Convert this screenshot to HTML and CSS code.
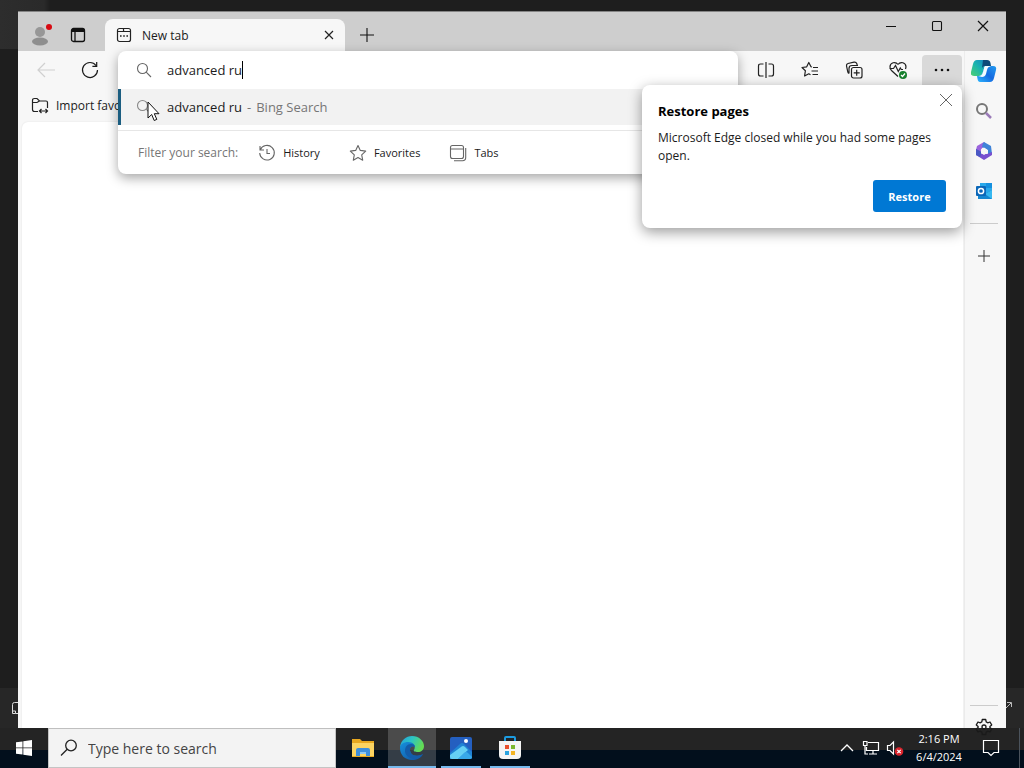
FILE: index.html
```html
<!DOCTYPE html>
<html lang="en">
<head>
    <meta charset="UTF-8">
    <meta name="viewport" content="width=device-width, initial-scale=1.0">
    <title>New tab</title>
    <link rel="stylesheet" href="styles.css">
</head>
<body>
<div class="desktop">

    <!-- app behind the browser -->
    <div class="back-app">
        <div class="back-top"></div>
        <div class="back-status">
            <svg width="18" height="16" viewBox="0 0 18 16" fill="none" stroke="#ddd"><path d="M18 2.500h-3.500q-2 0-2 2v6.500h3v2.500H18M12.500 11v2.500h3"/></svg>
            <svg width="18" height="16" viewBox="0 0 18 16" fill="none" stroke="#bbb"><path d="M0 8l5-5M1 2.500h4.500V7"/></svg>
        </div>
    </div>

    <div class="window">
        <div class="titlebar">
            <button class="avatar" aria-label="Profile">
                <svg width="24" height="24" viewBox="0 0 24 24"><circle cx="12" cy="9" r="5" fill="#979797"/><ellipse cx="12" cy="18.500" rx="8" ry="4" fill="#8e8e8e"/><circle cx="21" cy="4" r="3" fill="#d80a12"/></svg>
            </button>
            <button class="tab-actions" aria-label="Tab actions">
                <svg width="16" height="16" viewBox="0 0 16 16" fill="none" stroke="#111" stroke-width="1.300"><rect x="1.500" y="1.500" width="13" height="13" rx="2"/><path d="M2 3.500h12" stroke-width="3"/><path d="M5 4v10"/></svg>
            </button>
            <div class="tab">
                <svg width="16" height="16" viewBox="0 0 16 16" fill="none" stroke="#222" stroke-width="1.200"><rect x="1.500" y="1.500" width="13" height="13" rx="2"/><path d="M2 4.500h5.500M7.500 2v1.500q0 1 1 1h6"/><path d="M4 9h1.600M7.200 9h1.600M10.400 9h1.600" stroke-width="1.600"/></svg>
                <span class="tab-title">New tab</span>
                <button class="tab-close" aria-label="Close tab">
                    <svg width="10" height="10" viewBox="0 0 10 10" stroke="#222" stroke-width="1.200"><path d="M1 1l8 8M9 1L1 9"/></svg>
                </button>
            </div>
            <button class="new-tab" aria-label="New tab">
                <svg width="16" height="16" viewBox="0 0 16 16" stroke="#111" stroke-width="1.100"><path d="M8 1v14M1 8h14"/></svg>
            </button>
            <div class="window-controls">
                <button aria-label="Minimize"><svg width="12" height="12" viewBox="0 0 12 12" stroke="#111"><path d="M1 6.500h10"/></svg></button>
                <button aria-label="Maximize"><svg width="12" height="12" viewBox="0 0 12 12" fill="none" stroke="#111" stroke-width="1.100"><rect x="1.500" y="1.500" width="9" height="9" rx="1"/></svg></button>
                <button aria-label="Close"><svg width="12" height="12" viewBox="0 0 12 12" stroke="#111" stroke-width="1.200"><path d="M1 1l10 10M11 1L1 11"/></svg></button>
            </div>
        </div>

        <div class="window-body">
            <div class="main">
                <div class="toolbar">
                    <button class="tool" aria-label="Back" disabled>
                        <svg width="20" height="16" viewBox="0 0 20 16" fill="none" stroke="#d0d0d0" stroke-width="1.200"><path d="M19 8H2M9 1L2 8l7 7"/></svg>
                    </button>
                    <button class="tool" aria-label="Refresh">
                        <svg width="18" height="18" viewBox="0 0 18 18" fill="none" stroke="#1a1a1a" stroke-width="1.200"><path d="M16.500 9A7.500 7.500 0 1 1 15 4.500M15.700 1v4.300h-4.300"/></svg>
                    </button>

                    <div class="omnibox-slot">
                        <div class="omnibox">
                            <div class="omnibox-row">
                                <svg width="16" height="16" viewBox="0 0 16 16" fill="none" stroke="#666" stroke-width="1.100"><circle cx="6.500" cy="6.500" r="5"/><path d="M10.200 10.200L15 15"/></svg>
                                <input class="omnibox-input" type="text" value="advanced ru" size="9" aria-label="Search or enter web address">
                                <span class="caret"></span>
                            </div>
                            <button class="suggestion">
                                <svg width="16" height="16" viewBox="0 0 16 16" fill="none" stroke="#888" stroke-width="1.100"><circle cx="6.500" cy="6.500" r="5"/><path d="M10.200 10.200L15 15"/></svg>
                                <span class="suggestion-text"><span>advanced ru</span><span class="muted">-</span><span class="muted">Bing Search</span></span>
                            </button>
                            <div class="filters">
                                <span class="muted">Filter your search:</span>
                                <button>
                                    <svg width="18" height="18" viewBox="0 0 18 18" fill="none" stroke="#666" stroke-width="1.100"><path d="M2 2v4h4M2.300 5.800A7.300 7.300 0 1 1 1.700 9M9 5v4.500h3"/></svg>
                                    History
                                </button>
                                <button>
                                    <svg width="18" height="18" viewBox="0 0 18 18" fill="none" stroke="#666" stroke-width="1.100" stroke-linejoin="round"><path d="M9 1.500l2.300 4.900 5.400.7-4 3.700 1 5.400L9 13.600l-4.700 2.600 1-5.400-4-3.700 5.400-.7z"/></svg>
                                    Favorites
                                </button>
                                <button>
                                    <svg width="18" height="18" viewBox="0 0 18 18" fill="none" stroke="#666" stroke-width="1.100"><rect x="1.500" y="1.500" width="13" height="13" rx="2"/><path d="M1.500 5h13M16.700 4v9.500q0 3.200-3.200 3.200H5"/></svg>
                                    Tabs
                                </button>
                            </div>
                        </div>
                    </div>

                    <button class="tool" aria-label="Split screen">
                        <svg width="18" height="18" viewBox="0 0 18 18" fill="none" stroke="#222" stroke-width="1.200"><path d="M9 1v16M6.500 3H3.500q-2 0-2 2v8q0 2 2 2h3M11.500 3h3q2 0 2 2v8q0 2-2 2h-3"/></svg>
                    </button>
                    <button class="tool" aria-label="Favorites">
                        <svg width="18" height="18" viewBox="0 0 18 18" fill="none" stroke="#222" stroke-width="1.200" stroke-linejoin="round"><path d="M11 6l-1-.300L7.800 1.500 5.700 5.800l-4.700.700 3.400 3.200-.800 5.300 4.200-2.200 1.700.900M12 6.500h5M10.500 10h6.500M11.500 13.500h5.500"/></svg>
                    </button>
                    <button class="tool" aria-label="Collections">
                        <svg width="18" height="18" viewBox="0 0 18 18" fill="none" stroke="#222" stroke-width="1.200"><rect x="6.500" y="6.500" width="10.500" height="10.500" rx="2"/><path d="M11.700 8.800v6M8.700 11.800h6M4 12.500Q3 12 2.800 10.800L1.500 5Q1.200 3 3 2.500l6-1.300q2-.400 2.700 1.300l.600 1.500M4 12.500V7.500Q4 4.500 7 4.500h6"/></svg>
                    </button>
                    <button class="tool" aria-label="Browser essentials">
                        <svg width="20" height="20" viewBox="0 0 20 20" fill="none" stroke="#222" stroke-width="1.200"><path d="M10 4.500C7.500 1 2 2.500 2 7q0 2 1.500 3.500l6.500 6M10 4.500C12.500 1 18 2.500 18 7l-.500 2M1.500 8.500h4l2-3 2.800 6 2-3.500 1 1.500H15"/><circle cx="15" cy="15" r="4" fill="#16802d" stroke="none"/><path d="M13 15l1.500 1.500 2.500-3" stroke="#fff"/></svg>
                    </button>
                    <button class="tool more" aria-label="Settings and more">
                        <svg width="16" height="16" viewBox="0 0 16 16" fill="#111"><circle cx="2" cy="8" r="1.300"/><circle cx="8" cy="8" r="1.300"/><circle cx="14" cy="8" r="1.300"/></svg>
                    </button>
                </div>

                <div class="bookmarks">
                    <button>
                        <svg width="18" height="18" viewBox="0 0 18 18" fill="none" stroke="#222" stroke-width="1.200"><path d="M7 14.500H3.500q-2 0-2-2v-9q0-2 2-2H6L8.500 4H15q1.500 0 1.500 1.500V11M1.500 5.500H6L8.500 4M8.500 14h8M10.500 12l-2 2 2 2M14.500 12l2 2-2 2"/></svg>
                        Import favorites
                    </button>
                </div>

                <div class="page"></div>

                <div class="restore" role="dialog" aria-labelledby="restore-title">
                    <button class="restore-close" aria-label="Close">
                        <svg width="12" height="12" viewBox="0 0 12 12" stroke="#666"><path d="M0 0l12 12M12 0L0 12"/></svg>
                    </button>
                    <h2 id="restore-title">Restore pages</h2>
                    <p>Microsoft Edge closed while you had some pages open.</p>
                    <button class="restore-btn">Restore</button>
                </div>
            </div>

            <div class="sidebar">
                <button aria-label="Copilot">
                    <svg width="26" height="24" viewBox="0 0 26 24">
                        <defs>
                            <linearGradient id="cop1" x1="0" y1="1" x2="1" y2="0"><stop offset="0" stop-color="#4fd070"/><stop offset=".5" stop-color="#1bb5ae"/><stop offset="1" stop-color="#1483c8"/></linearGradient>
                            <linearGradient id="cop2" x1="0" y1="1" x2="1" y2="0"><stop offset="0" stop-color="#2eb8ff"/><stop offset=".5" stop-color="#1569e0"/><stop offset="1" stop-color="#249cf0"/></linearGradient>
                        </defs>
                        <path d="M6 1h10l-2 5-2 7q-1 4-4 4H3q-4 0-3-4L2 5q1-4 4-4z" fill="url(#cop1)"/>
                        <path d="M12 1h4q3 0 3.500 3l.500 3h-6q-2 0-3 2z" fill="#0d4a78"/>
                        <path d="M20 7h2q4 0 3 4l-2 8q-1 4-4 4H9q-2 0-2.500-3L6 17h2q3 0 4-4l1-3z" fill="url(#cop2)"/>
                        <path d="M14.500 7H20q-3 0-4 4l-1 4q-1 3-4 3l-4-1h1q3 0 4-4l1.500-5z" fill="#f4fbff"/>
                    </svg>
                </button>
                <button aria-label="Search">
                    <svg width="18" height="18" viewBox="0 0 18 18" fill="none"><circle cx="7" cy="7" r="5" stroke="#777" stroke-width="2"/><path d="M11 11l5 5" stroke="#9b7bb8" stroke-width="2.500"/></svg>
                </button>
                <button aria-label="Microsoft 365">
                    <svg width="18" height="18" viewBox="0 0 18 18"><path d="M9 0L2 4 1 8l4 3 2-5 6-2z" fill="#9a63dc"/><path d="M9 0l7 4 1 8-4 1V8L7 5q0-3 2-5z" fill="#3f83d8"/><path d="M1 7v6l8 5 8-5v-3l-5 2H6z" fill="#7850cf"/><path d="M1 7v6l4 2 2-5z" fill="#4a58c4"/><path d="M9 5.500l3 2v3.500l-3 2-3-2V7.500z" fill="#f7f7f7"/></svg>
                </button>
                <button aria-label="Outlook">
                    <svg width="18" height="18" viewBox="0 0 18 18"><rect x="5" y="1" width="12" height="10" fill="#28a8ea"/><path d="M11 1h6v5h-6z" fill="#1490df"/><path d="M3 8l7 4 7-4v9H3z" fill="#1586d0"/><path d="M10 12l7-4v9z" fill="#36b8f0"/><rect x="1" y="4" width="10" height="10" rx="1" fill="#0b67b8"/><circle cx="6" cy="9" r="2.600" fill="none" stroke="#fff" stroke-width="1.500"/></svg>
                </button>
                <hr>
                <button class="add" aria-label="Customize">
                    <svg width="14" height="14" viewBox="0 0 14 14" stroke="#333"><path d="M7 1v12M1 7h12"/></svg>
                </button>
                <hr class="bottom-line">
                <button class="settings" aria-label="Settings">
                    <svg width="18" height="18" viewBox="0 0 18 18" fill="none" stroke="#1a1a1a" stroke-width="1.300" stroke-linejoin="round"><path d="M7.300 1.500h3.400l.500 2.400 1.500.900 2.300-.800 1.700 2.900L14.900 8.500v1l1.800 1.600L15 14l-2.300-.800-1.500.900-.500 2.400H7.300l-.500-2.400-1.500-.900L3 14l-1.700-2.900 1.800-1.600v-1L1.300 6.900 3 4l2.300.800 1.500-.900z"/><circle cx="9" cy="9" r="2"/></svg>
                </button>
            </div>
        </div>
    </div>

    <div class="taskbar">
        <button class="start" aria-label="Start">
            <svg width="16" height="16" viewBox="0 0 16 16" fill="#fff"><path d="M0 2.300L6.500 1.400v6.100H0zM7.300 1.300L16 0v7.500H7.300zM0 8.300h6.500v6.300L0 13.700zM7.300 8.300H16V16l-8.700-1.300z"/></svg>
        </button>
        <label class="search">
            <svg width="18" height="18" viewBox="0 0 18 18" fill="none" stroke="#222" stroke-width="1.300"><circle cx="11" cy="6.500" r="5.300"/><path d="M7.200 10.200L1 16.500"/></svg>
            <input type="text" placeholder="Type here to search" aria-label="Type here to search">
        </label>
        <div class="apps">
            <button aria-label="File Explorer">
                <svg width="24" height="24" viewBox="0 0 24 24"><path d="M1 3h8l2 2h12v16H1z" fill="#e8a820"/><path d="M1 7h22v13H1z" fill="#fcd462"/><path d="M5 20v-6q0-2 2-2h10q2 0 2 2v6h-4v-4H9v4z" fill="#3e8fdc"/><path d="M9 16h6v2H9z" fill="#8ec7f2"/></svg>
            </button>
            <button class="active" aria-label="Microsoft Edge">
                <svg width="26" height="26" viewBox="0 0 26 26">
                    <defs>
                        <linearGradient id="edge1" x1="0" y1="0" x2="1" y2=".4"><stop offset="0" stop-color="#259ddd"/><stop offset=".5" stop-color="#2cc5c4"/><stop offset="1" stop-color="#64dc55"/></linearGradient>
                        <linearGradient id="edge2" x1="0" y1="0" x2="1" y2="1"><stop offset="0" stop-color="#1690dc"/><stop offset="1" stop-color="#114f9d"/></linearGradient>
                    </defs>
                    <path d="M1 12C2 5 7 1 13 1c7 0 12 5 12 10 0 4-3 6-6 6s-5-1-4-2c2-3 0-7-5-7-4 0-7 2-9 4z" fill="url(#edge1)"/>
                    <path d="M1 13c0-4 4-6 8-6 5 0 7 3 7 5-1-1-3-1-4 0-2 2-1 6 2 8 3 1 7 1 10-1-2 4-6 6-11 6C6 25 1 20 1 13z" fill="url(#edge2)"/>
                    <path d="M6 16c0-4 2-7 6-7 2 0 4 1 4 3-1-1-3-1-4 0-2 2-1 6 2 8 3 1 7 1 10-1-2 3-5 5-8 5-6 0-10-4-10-8z" fill="#135ca9"/>
                </svg>
            </button>
            <button class="open" aria-label="Photos">
                <svg width="24" height="24" viewBox="0 0 24 24"><rect x="1" y="1" width="22" height="22" rx="2" fill="#245fc0"/><path d="M1 17L11 8q2-2 4 0l8 8v5q0 2-2 2H1z" fill="#1f83d4"/><path d="M1 19l11-8q2-2 4 0l3 3-10 9H3q-2 0-2-2z" fill="#65d0f4"/><path d="M9 23l6-6q2-2 4 0l4 4q0 2-2 2z" fill="#38a9e9"/><circle cx="17" cy="5" r="2" fill="#fff"/></svg>
            </button>
            <button class="open" aria-label="Microsoft Store">
                <svg width="24" height="26" viewBox="0 0 24 26"><path d="M7 7V3q0-1 1-1h8q1 0 1 1v4" fill="none" stroke="#1c9be0" stroke-width="2"/><path d="M1 6h22v14q0 4-4 4H5q-4 0-4-4z" fill="#f5f5f5"/><path d="M7 10h4v4H7z" fill="#e8502e"/><path d="M13 10h4v4h-4z" fill="#7cb82f"/><path d="M7 16h4v4H7z" fill="#2ba4e0"/><path d="M13 16h4v4h-4z" fill="#f5b524"/></svg>
            </button>
        </div>
        <div class="tray">
            <button aria-label="Show hidden icons">
                <svg width="14" height="14" viewBox="0 0 14 14" fill="none" stroke="#fff" stroke-width="1.300"><path d="M1 10l6-6 6 6"/></svg>
            </button>
            <button aria-label="Network">
                <svg width="18" height="16" viewBox="0 0 18 16" fill="none" stroke="#fff" stroke-width="1.200"><path d="M6 2.500h10.500v8H4.500V7M7 14h8M11 10.500V14M1.500 1.500H5v4H1.500zM3 6v8h3"/></svg>
            </button>
            <button aria-label="Volume muted">
                <svg width="18" height="16" viewBox="0 0 18 16" fill="none" stroke="#fff" stroke-width="1.200"><path d="M1.500 5.500H4L7.500 2v12L4 10.500H1.500z"/><circle cx="13" cy="11.500" r="4.300" fill="#d9242d" stroke="none"/><path d="M11.300 9.800l3.400 3.400M14.700 9.800l-3.400 3.400"/></svg>
            </button>
            <div class="clock"><span>2:16 PM</span><span>6/4/2024</span></div>
            <button class="notify" aria-label="Notifications">
                <svg width="18" height="18" viewBox="0 0 18 18" fill="none" stroke="#fff" stroke-width="1.200"><path d="M1.500 1.500h15v12H12l-3 3-3-3H1.500z"/></svg>
            </button>
            <div class="show-desktop"></div>
        </div>
    </div>

    <svg class="pointer" width="13" height="21" viewBox="0 0 13 21"><path d="M1 1v16l3.700-3.500L7.200 19.500l2.600-1.100-2.500-5.700H12z" fill="#fff" stroke="#111"/></svg>
</div>
</body>
</html>
```

FILE: styles.css
```css
* {
    box-sizing: border-box;
}
body {
    margin: 0;
    font-family: "Open Sans", "Noto Sans", sans-serif;
    font-size: 12px;
    color: #1b1b1b;
}
button {
    display: flex;
    align-items: center;
    justify-content: center;
    margin: 0;
    padding: 0;
    border: 0;
    background: none;
    font: inherit;
    color: inherit;
    white-space: nowrap;
}
svg {
    display: block;
    flex: none;
}
.muted {
    color: #767676;
}

/* desktop */
.desktop {
    position: relative;
    display: flex;
    flex-direction: column;
    height: 100vh;
    overflow: hidden;
    background: #1e1e1e;
}
.back-app {
    position: absolute;
    inset: 0 0 40px;
    display: flex;
    flex-direction: column;
    justify-content: space-between;
}
.back-top {
    height: 49px;
    background: linear-gradient(90deg, #2d2d2d 0, #2a2a2a 44px, #1e1e1e 50px);
}
.back-status {
    display: flex;
    align-items: center;
    justify-content: space-between;
    height: 40px;
    background: #272727;
}

/* browser window */
.window {
    position: relative;
    z-index: 1;
    flex: 1;
    min-height: 0;
    display: flex;
    flex-direction: column;
    margin: 11px 18px 0;
    background: #f7f7f7;
}
.titlebar {
    display: flex;
    align-items: flex-end;
    height: 40px;
    background: #cecece;
    border-top: 1px solid #858585;
}
.avatar {
    width: 44px;
    height: 32px;
}
.tab-actions {
    width: 32px;
    height: 32px;
}
.tab {
    display: flex;
    align-items: center;
    gap: 10px;
    width: 240px;
    height: 32px;
    margin-left: 11px;
    padding: 0 10px 0 11px;
    background: #f7f7f7;
    border-radius: 8px 8px 0 0;
}
.tab-title {
    flex: 1;
}
.tab-close {
    width: 12px;
    height: 20px;
}
.new-tab {
    width: 44px;
    height: 32px;
}
.window-controls {
    display: flex;
    align-self: flex-start;
    margin-left: auto;
}
.window-controls button {
    width: 46px;
    height: 28px;
}
.window-body {
    flex: 1;
    min-height: 0;
    display: flex;
}
.main {
    position: relative;
    flex: 1;
    min-width: 0;
    display: flex;
    flex-direction: column;
}

/* toolbar */
.toolbar {
    display: flex;
    align-items: center;
    height: 38px;
    padding: 0 2px 0 6px;
}
.tool {
    width: 44px;
    height: 30px;
}
.more {
    width: 40px;
    margin-left: 2px;
    background: #d9d9d9;
    border-radius: 4px 4px 0 0;
}
.omnibox-slot {
    position: relative;
    flex: 1;
    align-self: stretch;
    margin: 0 6px;
}
.omnibox {
    position: absolute;
    top: 0;
    left: 0;
    right: 0;
    z-index: 2;
    background: #fff;
    border-radius: 8px;
    box-shadow: 0 4px 12px rgba(0, 0, 0, .35);
    font-size: 13px;
}
.omnibox-row {
    display: flex;
    align-items: center;
    height: 38px;
    padding-left: 18px;
}
.omnibox-input {
    field-sizing: content;
    margin-left: 15px;
    padding: 0;
    border: 0;
    outline: 0;
    background: none;
    font: inherit;
    color: inherit;
}
.caret {
    width: 1px;
    height: 18px;
    background: #000;
}
.suggestion {
    justify-content: flex-start;
    gap: 15px;
    width: 100%;
    height: 36px;
    padding-left: 15px;
    background: #f2f2f2;
    border-left: 3px solid #1b5d80;
}
.suggestion-text {
    display: flex;
    gap: 5px;
}
.filters {
    display: flex;
    align-items: center;
    height: 44px;
    margin-top: 5px;
    padding-left: 20px;
    border-top: 1px solid #e6e6e6;
    font-size: 12px;
}
.filters button {
    gap: 7px;
    margin-right: 9px;
    margin-left: 20px;
    font-size: 11px;
}

/* bookmarks bar and page */
.bookmarks {
    display: flex;
    align-items: center;
    height: 33px;
    padding-left: 13px;
}
.bookmarks button {
    gap: 7px;
}
.page {
    flex: 1;
    margin: 0 1px 0 4px;
    background: #fff;
    border-top-left-radius: 6px;
    box-shadow: 0 0 2px rgba(0, 0, 0, .1);
}

/* restore popup */
.restore {
    position: absolute;
    top: 34px;
    right: 2px;
    z-index: 3;
    width: 320px;
    padding: 16px;
    background: #fff;
    border-radius: 8px;
    box-shadow: 0 4px 14px rgba(0, 0, 0, .4);
}
.restore h2 {
    margin: 0 0 8px;
    font-size: 13px;
    line-height: 20px;
    color: #000;
}
.restore p {
    margin: 0 0 15px;
    line-height: 18px;
}
.restore-close {
    position: absolute;
    top: 5px;
    right: 6px;
    width: 20px;
    height: 20px;
}
.restore-btn {
    width: 73px;
    height: 32px;
    margin-left: auto;
    background: #0078d4;
    border-radius: 3px;
    color: #fff;
    font-size: 11px;
    font-weight: bold;
}

/* sidebar */
.sidebar {
    display: flex;
    flex-direction: column;
    align-items: center;
    width: 42px;
    padding-right: 4px;
    border-left: 1px solid #ececec;
}
.sidebar button {
    width: 36px;
    height: 40px;
    flex: none;
}
.sidebar hr {
    width: 28px;
    margin: 12px 0;
    border: 0;
    border-top: 1px solid #ccc;
}
.sidebar .bottom-line {
    margin: auto 0 0;
}
.sidebar .settings {
    height: 42px;
    margin-bottom: -20px;
}

/* taskbar */
.taskbar {
    display: flex;
    height: 40px;
    background: linear-gradient(#242424 22px, #020f1c 22px);
    color: #fff;
}
.start {
    width: 48px;
}
.search {
    display: flex;
    align-items: center;
    gap: 10px;
    width: 288px;
    padding-left: 11px;
    background: #f3f3f3;
    border: 1px solid #c4c4c4;
}
.search input {
    flex: 1;
    min-width: 0;
    padding: 0;
    border: 0;
    background: none;
    font: inherit;
    font-size: 14px;
}
.search input::placeholder {
    color: #444;
}
.apps {
    display: flex;
    gap: 1px;
    margin-left: 3px;
}
.apps button {
    position: relative;
    width: 48px;
}
.apps .active {
    background: linear-gradient(#4b4b4b 22px, #343d46 22px);
}
.apps .active::after,
.apps .open::after {
    content: "";
    position: absolute;
    bottom: 0;
    left: 4px;
    right: 4px;
    height: 2px;
    background: #76b9ed;
}
.apps .active::after {
    left: 0;
    right: 0;
}
.tray {
    display: flex;
    align-items: center;
    margin-left: auto;
}
.tray button {
    width: 24px;
    height: 40px;
}
.clock {
    display: flex;
    flex-direction: column;
    align-items: center;
    width: 64px;
    font-size: 11px;
    line-height: 18px;
}
.tray .notify {
    width: 40px;
}
.show-desktop {
    align-self: stretch;
    width: 5px;
    margin-left: 8px;
    border-left: 1px solid #4b535c;
}

.pointer {
    position: absolute;
    top: 101px;
    left: 147px;
    z-index: 10;
}
```
